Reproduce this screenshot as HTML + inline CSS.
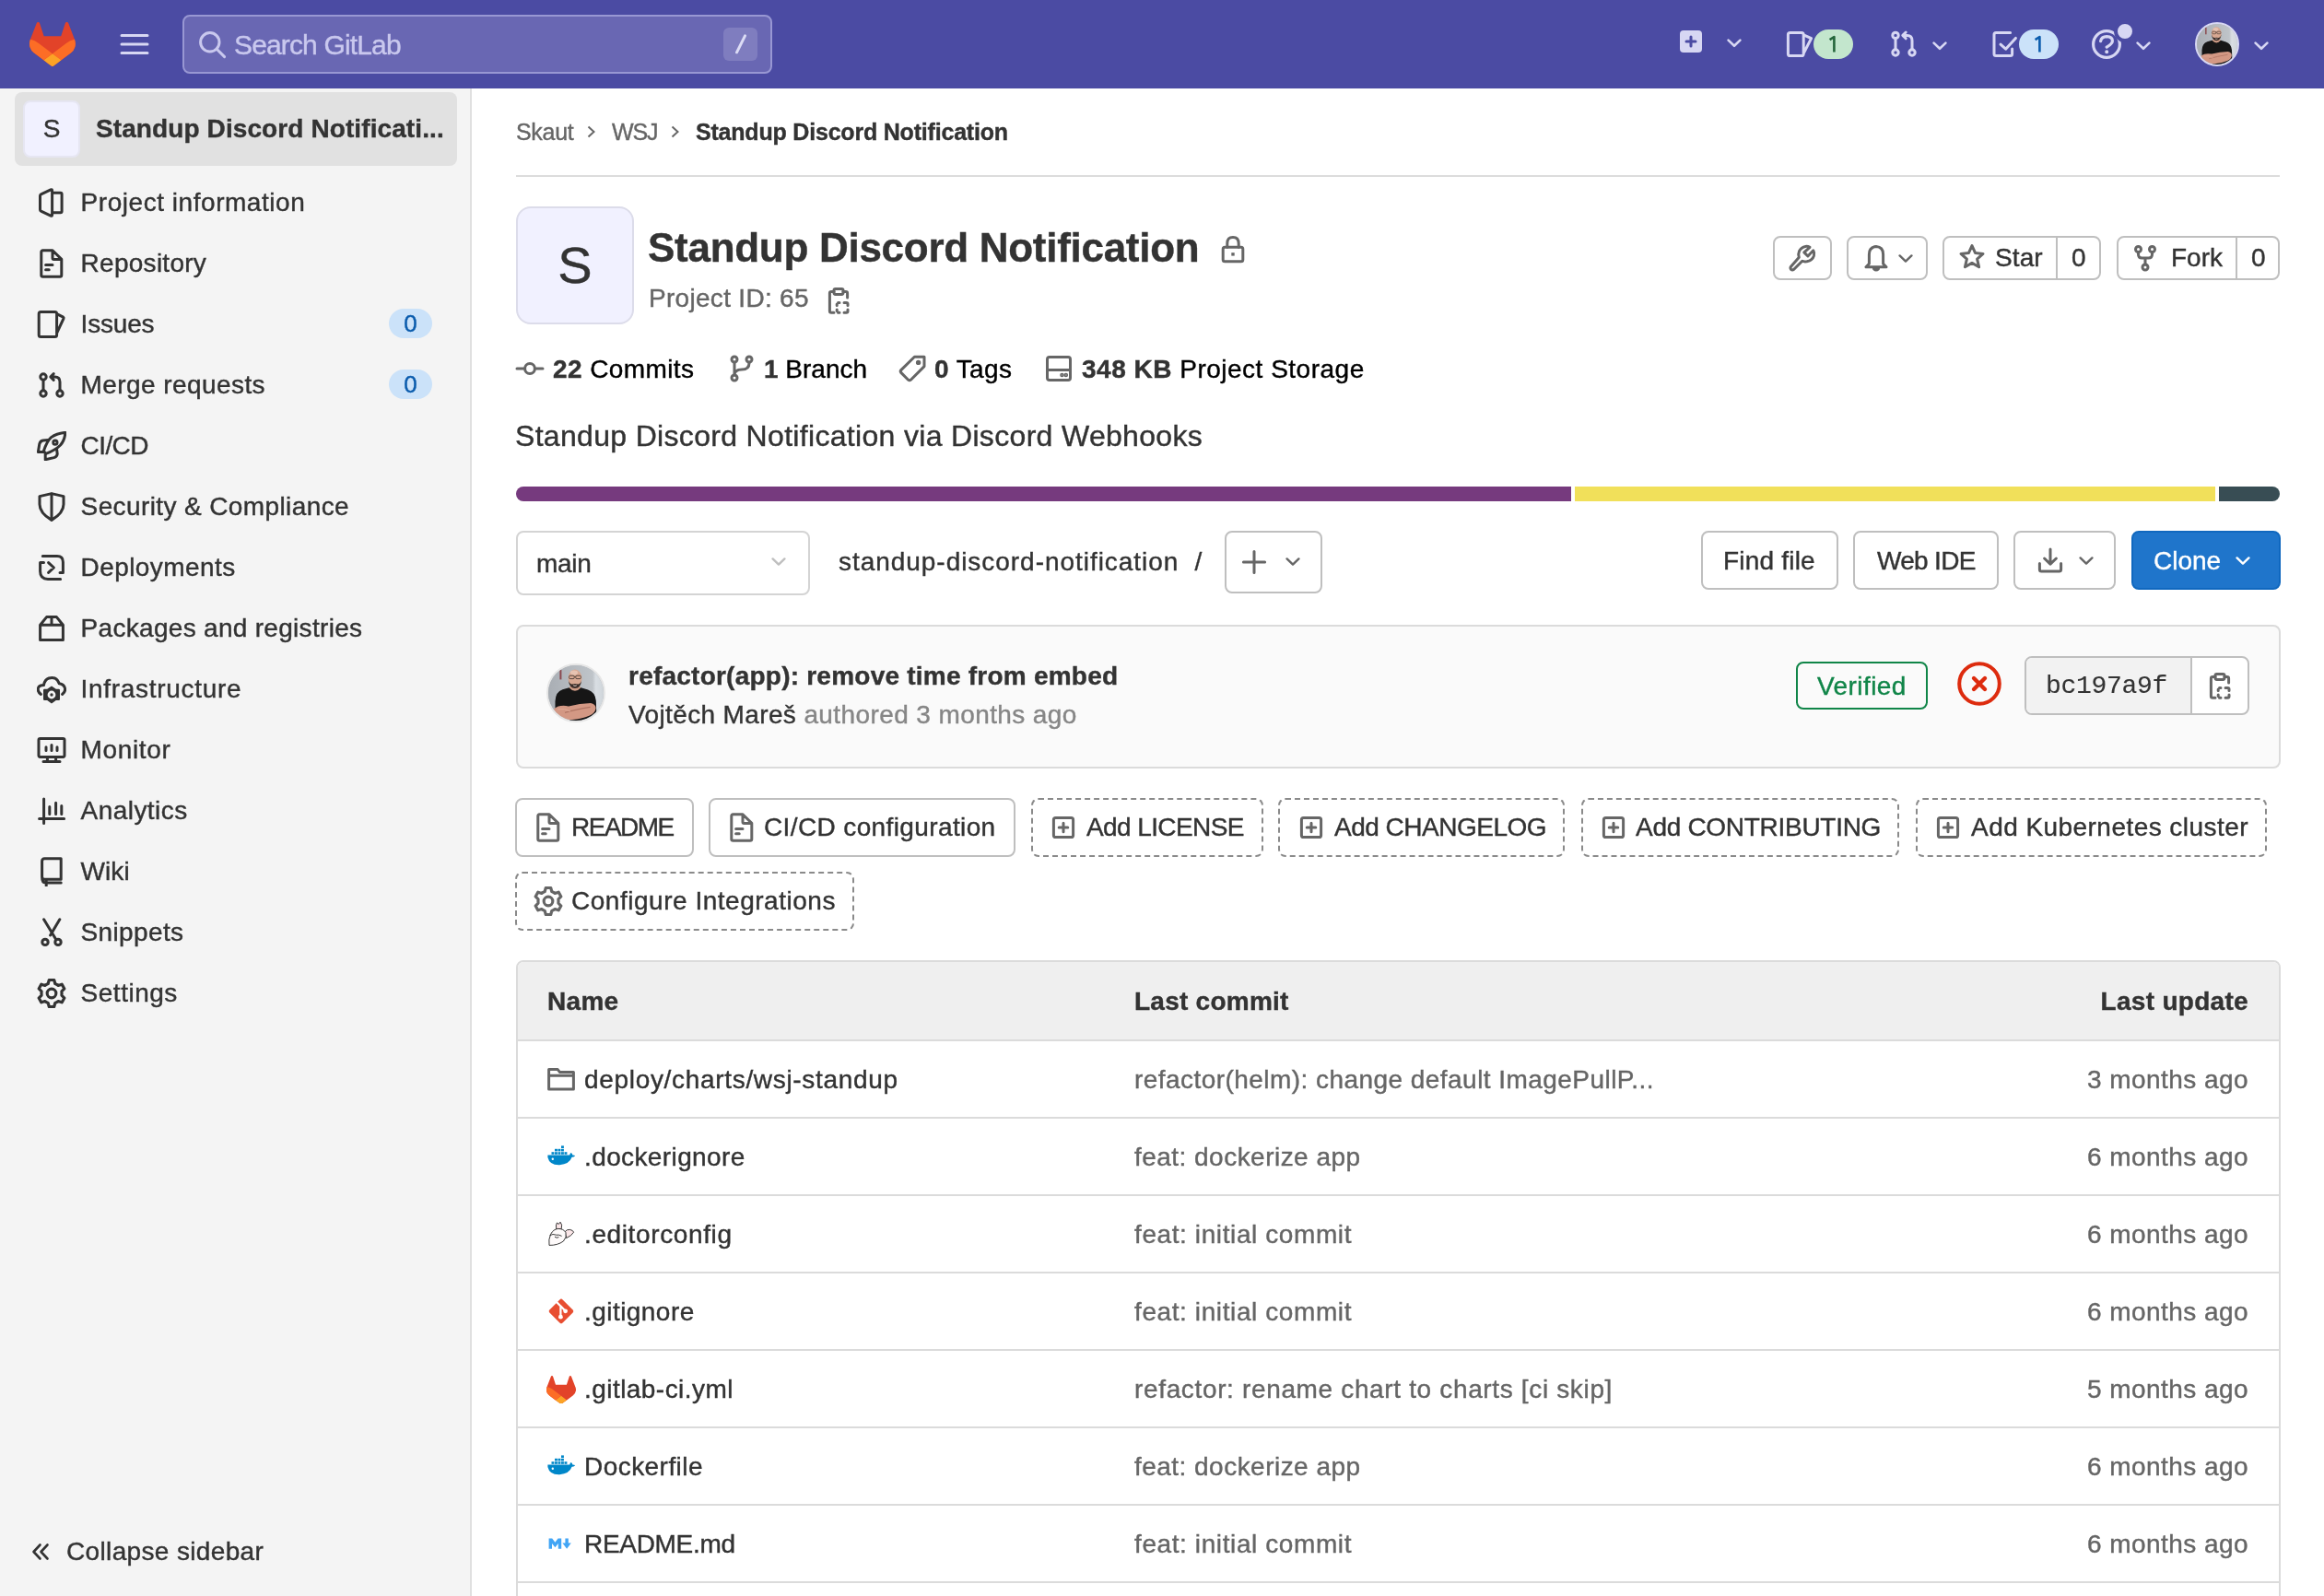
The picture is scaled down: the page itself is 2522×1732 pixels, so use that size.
<!DOCTYPE html>
<html><head><meta charset="utf-8">
<style>
*{box-sizing:border-box;margin:0;padding:0}
html,body{width:2522px;height:1732px;overflow:hidden;background:#fff}
.wrap{position:absolute;left:0;top:0;width:2522px;height:1732px;will-change:transform}
body{font-family:"Liberation Sans",sans-serif;color:#333;font-size:28px;line-height:40px;position:relative;-webkit-text-stroke:0.4px currentColor}
.abs{position:absolute}
svg{display:block}
.hdr{left:0;top:0;width:2522px;height:96px;background:#4b4ba3}
.sb{left:0;top:96px;width:512px;height:1636px;background:#f4f4f4;border-right:2px solid #e0e0e0}
.nowrap{white-space:nowrap}
.sbt{left:87.6px;white-space:nowrap;letter-spacing:0.5px;color:#333}
.bdg{width:47px;height:32px;border-radius:16px;background:#cbe2f9;color:#0b5cad;font-size:26px;line-height:32px;text-align:center}
.btn{border:2px solid #bfbfbf;border-radius:8px;background:#fff}
.g6{color:#666}
.dbtn{border:2px dashed #8a8a8a;border-radius:8px;background:#fff}
.sbtn{border:2px solid #bfbfbf;border-radius:8px;background:#fff}
</style></head>
<body><div class="wrap">
<!-- HEADER -->
<div class="abs hdr">
  <!-- logo -->
  <svg class="abs" style="left:32px;top:24px" width="50" height="48" viewBox="0 0 25 24">
    <path fill="#e24329" d="M24.507 9.5l-.034-.09L21.082.562a.896.896 0 0 0-1.694.091l-2.29 7.01H7.825L5.535.653a.898.898 0 0 0-1.694-.09L.451 9.411.416 9.5a6.297 6.297 0 0 0 2.09 7.278l.012.01.03.022 5.16 3.867 2.56 1.935 1.554 1.176a1.051 1.051 0 0 0 1.268 0l1.555-1.176 2.56-1.935 5.197-3.89.014-.01A6.297 6.297 0 0 0 24.507 9.5z"/>
    <path fill="#fc6d26" d="M24.507 9.5l-.034-.09a11.44 11.44 0 0 0-4.56 2.051l-7.447 5.632 4.742 3.584 5.197-3.89.014-.01A6.297 6.297 0 0 0 24.507 9.5z"/>
    <path fill="#fca326" d="M7.707 20.677l2.56 1.935 1.555 1.176a1.051 1.051 0 0 0 1.268 0l1.555-1.176 2.56-1.935-4.743-3.584-4.755 3.584z"/>
    <path fill="#fc6d26" d="M5.01 11.461a11.43 11.43 0 0 0-4.56-2.05L.416 9.5a6.297 6.297 0 0 0 2.09 7.278l.012.01.03.022 5.16 3.867 4.745-3.584-7.444-5.632z"/>
  </svg>
  <!-- hamburger -->
  <svg class="abs" style="left:130px;top:36px" width="32" height="24" viewBox="0 0 32 24">
    <g stroke="#d7d7f3" stroke-width="3" stroke-linecap="round"><path d="M2 2.5h28M2 12h28M2 21.5h28"/></g>
  </svg>
  <!-- search -->
  <div class="abs" style="left:198px;top:16px;width:640px;height:64px;border-radius:8px;background:#6967b3;border:2px solid #9897d3"></div>
  <svg class="abs" style="left:214px;top:32px" width="32" height="32" viewBox="0 0 16 16">
    <circle cx="6.9" cy="6.9" r="5.1" fill="none" stroke="#c9c8ee" stroke-width="1.5"/>
    <path d="M10.6 10.6l4.2 4.2" stroke="#c9c8ee" stroke-width="1.5" stroke-linecap="round"/>
  </svg>
  <div class="abs nowrap" style="left:254px;top:28.8px;color:#c9c8ee;font-size:30px;line-height:40px;letter-spacing:-0.85px">Search GitLab</div>
  <div class="abs" style="left:785px;top:30px;width:37px;height:36px;border-radius:6px;background:#7f7dbf"></div>
  <svg class="abs" style="left:785px;top:30px" width="37" height="36" viewBox="0 0 37 36"><path d="M23.5 8.8L14.5 26.8" stroke="#dcdcf5" stroke-width="3" stroke-linecap="round"/></svg>
</div>


<!-- HEADER RIGHT -->
<div class="abs" style="left:1823px;top:33px;width:24px;height:24px;border-radius:4px;background:#d7d7f3"></div>
<svg class="abs" style="left:1823px;top:33px" width="24" height="24" viewBox="0 0 24 24" fill="none" stroke="#4b4ba3" stroke-width="3" stroke-linecap="round"><path d="M12 7V17 M7 12H17"/></svg>
<svg class="abs" style="left:1874px;top:39px" width="16" height="16" viewBox="0 0 16 16" fill="none" stroke="#d7d7f3" stroke-width="2.6" stroke-linecap="round" stroke-linejoin="round"><path d="M1.6 4.6L8 10.8L14.4 4.6"/></svg>
<svg class="abs" style="left:1938px;top:32px" width="32" height="32" viewBox="0 0 32 32" fill="none" stroke="#d7d7f3" stroke-width="3" stroke-linecap="round" stroke-linejoin="round"><path d="M4.6 3.4H17Q19.2 3.4 19.2 5.6V26.4Q19.2 28.6 17 28.6H4.6Q2.4 28.6 2.4 26.4V5.6Q2.4 3.4 4.6 3.4Z M19.2 5.8L27.6 9.6L19.2 26"/></svg>
<div class="abs" style="left:1968px;top:32px;width:43px;height:32px;border-radius:16px;background:#c3e6cd"><svg class="abs" style="left:0;top:0" width="43" height="32" viewBox="0 0 43 32"><path d="M17.6 11.2L22.4 8V24.6" fill="none" stroke="#24663b" stroke-width="2.6" stroke-linejoin="round"/></svg></div>
<svg class="abs" style="left:2050px;top:32px" width="32" height="32" viewBox="0 0 32 32" fill="none" stroke="#d7d7f3" stroke-width="3" stroke-linecap="round" stroke-linejoin="round"><circle cx="7" cy="6.4" r="3.2"/><circle cx="7" cy="25" r="3.2"/><circle cx="25" cy="25" r="3.2"/><path d="M7 9.6V21.8 M25 21.8V12Q25 6.4 19.5 6.4H15.5 M18.2 3L14.8 6.4L18.2 9.8"/></svg>
<svg class="abs" style="left:2097px;top:42px" width="16" height="16" viewBox="0 0 16 16" fill="none" stroke="#d7d7f3" stroke-width="2.6" stroke-linecap="round" stroke-linejoin="round"><path d="M1.6 4.6L8 10.8L14.4 4.6"/></svg>
<svg class="abs" style="left:2161px;top:32px" width="32" height="32" viewBox="0 0 32 32" fill="none" stroke="#d7d7f3" stroke-width="3" stroke-linecap="round" stroke-linejoin="round"><path d="M20.6 3.4H5Q3 3.4 3 5.4V26.6Q3 28.6 5 28.6H20.6Q22.6 28.6 22.6 26.6V21 M10 16.2L15.6 21.2L26.4 9.4"/></svg>
<div class="abs" style="left:2191px;top:32px;width:43px;height:32px;border-radius:16px;background:#cbe2f9"><svg class="abs" style="left:0;top:0" width="43" height="32" viewBox="0 0 43 32"><path d="M17.6 11.2L22.4 8V24.6" fill="none" stroke="#0b5cad" stroke-width="2.6" stroke-linejoin="round"/></svg></div>
<svg class="abs" style="left:2270px;top:32px" width="32" height="32" viewBox="0 0 32 32" fill="none" stroke="#d7d7f3" stroke-width="3.2" stroke-linecap="round" stroke-linejoin="round"><circle cx="16" cy="16" r="14.4"/><path d="M9.6 12.6Q10.6 7.6 16.2 7.6Q22.4 7.8 22.4 12.4Q22.4 15.2 16.2 19.2"/><circle cx="16.2" cy="24.2" r="1.2" fill="#d7d7f3" stroke-width="1.6"/></svg>
<div class="abs" style="left:2294px;top:22px;width:24px;height:24px;border-radius:50%;background:#d7d7f3;border:4px solid #4b4ba3"></div>
<svg class="abs" style="left:2318px;top:42px" width="16" height="16" viewBox="0 0 16 16" fill="none" stroke="#d7d7f3" stroke-width="2.6" stroke-linecap="round" stroke-linejoin="round"><path d="M1.6 4.6L8 10.8L14.4 4.6"/></svg>
<div class="abs" style="left:2382px;top:24px;width:48px;height:48px;border-radius:50%;background:#b3b7bc;border:2px solid #d7d7f3;overflow:hidden"><svg width="44" height="44" viewBox="0 0 60 60"><defs><linearGradient id="bg2" x1="0" y1="0" x2="1" y2="0"><stop offset="0" stop-color="#a9aeb4"/><stop offset="0.8" stop-color="#bfc4c9"/><stop offset="0.86" stop-color="#d9dee3"/><stop offset="1" stop-color="#cfd5da"/></linearGradient><filter id="bl2" x="-10%" y="-10%" width="120%" height="120%"><feGaussianBlur stdDeviation="0.55"/></filter></defs><g filter="url(#bl2)"><rect width="60" height="60" fill="url(#bg2)"/><rect x="12.4" y="5" width="2" height="10.4" fill="#8b4a4f"/><path d="M23 23H35V31H23Z" fill="#cf9c86"/><ellipse cx="29" cy="14.2" rx="7.4" ry="9.6" fill="#d8a892"/><ellipse cx="28" cy="8" rx="4" ry="2.4" fill="#e6c3b2"/><path d="M21.8 15.4Q22.6 24.8 29 25Q35.4 24.8 36.2 15.4Q35.4 19.6 32.4 20.6Q29 19.6 25.6 20.6Q22.6 19.6 21.8 15.4Z" fill="#3d2f29"/><path d="M30.8 21.8Q29 22.8 27.2 21.8" stroke="#f2e4dc" stroke-width="0.9" fill="none"/><g fill="none" stroke="#4a3c36" stroke-width="0.9"><rect x="22.6" y="11.2" width="5.6" height="3.4" rx="1.2"/><rect x="29.8" y="11.2" width="5.6" height="3.4" rx="1.2"/><path d="M28.2 12.4H29.8"/></g><path d="M7.5 60V39Q8 28.5 15.5 26.2L22.6 24.2Q29 31.4 35.4 24.2L43 26.6Q50.6 29 51.8 38.4L52.6 60Z" fill="#121214"/><path d="M6.2 47.2Q12 42.4 22 44.4Q34 41.2 46 41Q51.6 42 51.6 46.6Q51 52 45 54.6Q36 58.6 26 59Q14 59.6 8.6 55.4Q5.4 52 6.2 47.2Z" fill="#d39884"/><path d="M18 51.4Q30 48 45.6 45.4" stroke="#b07564" stroke-width="1.1" fill="none"/><path d="M10 47.8Q18 46.2 24 50" stroke="#e1ad9a" stroke-width="0.9" fill="none"/></g></svg></div>
<svg class="abs" style="left:2446px;top:42px" width="16" height="16" viewBox="0 0 16 16" fill="none" stroke="#d7d7f3" stroke-width="2.6" stroke-linecap="round" stroke-linejoin="round"><path d="M1.6 4.6L8 10.8L14.4 4.6"/></svg>

<!-- SIDEBAR -->
<div class="abs sb"></div>
<div class="abs" style="left:16px;top:100px;width:480px;height:80px;border-radius:8px;background:#e1e1e1"></div>
<div class="abs" style="left:25px;top:109px;width:62px;height:62px;border-radius:8px;background:#f1f1ff;border:2px solid #e6e6f2;text-align:center;font-size:28px;line-height:58px;color:#333">S</div>
<div class="abs nowrap" style="left:104px;top:120.3px;font-weight:bold;letter-spacing:0.1px">Standup Discord Notificati...</div>
<svg class="abs" style="left:40px;top:203.8px" width="32" height="32" viewBox="0 0 32 32" fill="none" stroke="#333" stroke-width="3" stroke-linecap="round" stroke-linejoin="round"><path d="M4.5 6.8L15 1.8Q16.6 1.2 16.6 3V29Q16.6 30.8 15 30.2L4.5 25.2Q3.5 24.7 3.5 23.6V8.4Q3.5 7.3 4.5 6.8Z M16.6 5.2H25.6Q27.1 5.2 27.1 6.7V25.3Q27.1 26.8 25.6 26.8H16.6"/></svg>
<div class="abs sbt" style="top:200.1px;letter-spacing:0.54px">Project information</div>
<svg class="abs" style="left:40px;top:269.8px" width="32" height="32" viewBox="0 0 32 32" fill="none" stroke="#333" stroke-width="3" stroke-linecap="round" stroke-linejoin="round"><path d="M6.5 1.8H17L26.8 11.4V28.5Q26.8 30.2 25.1 30.2H6.5Q4.8 30.2 4.8 28.5V3.5Q4.8 1.8 6.5 1.8Z M17 1.8V10Q17 11.4 18.4 11.4H26.8 M9.6 17.6H17 M9.6 22.8H13.2"/></svg>
<div class="abs sbt" style="top:266.1px;letter-spacing:0.27px">Repository</div>
<svg class="abs" style="left:40px;top:335.8px" width="32" height="32" viewBox="0 0 32 32" fill="none" stroke="#333" stroke-width="3" stroke-linecap="round" stroke-linejoin="round"><path d="M4.2 2.4H19.6Q21.6 2.4 21.6 4.4V27.6Q21.6 29.6 19.6 29.6H4.2Q2.2 29.6 2.2 27.6V4.4Q2.2 2.4 4.2 2.4Z M21.6 4.6L28.6 8.2Q29.4 8.8 29 9.7L21.6 25.6"/></svg>
<div class="abs sbt" style="top:332.1px;letter-spacing:-0.2px">Issues</div>
<div class="abs bdg" style="left:422px;top:335.4px">0</div>
<svg class="abs" style="left:40px;top:401.8px" width="32" height="32" viewBox="0 0 32 32" fill="none" stroke="#333" stroke-width="3" stroke-linecap="round" stroke-linejoin="round"><circle cx="7" cy="7" r="3.2"/><circle cx="7" cy="25" r="3.2"/><circle cx="25" cy="25" r="3.2"/><path d="M7 10.2V21.8 M25 21.8V12.5Q25 7 19.5 7H15.5 M18.2 3.6L14.8 7L18.2 10.4"/></svg>
<div class="abs sbt" style="top:398.1px;letter-spacing:0.42px">Merge requests</div>
<div class="abs bdg" style="left:422px;top:401.4px">0</div>
<svg class="abs" style="left:40px;top:467.8px" width="32" height="32" viewBox="0 0 32 32" fill="none" stroke="#333" stroke-width="3" stroke-linecap="round" stroke-linejoin="round"><path d="M30.8 1.4Q22 2 15.5 6.6Q11 10.5 7.4 21.4L9.8 24.4Q20 20.6 25.6 15Q30.4 9.6 30.8 1.4Z"/><path d="M12.4 9.4L6.6 10Q3.6 10.6 2.8 13.8L1.4 22.6H7.4"/><path d="M21.6 19.8L22.2 24.6Q22 27.6 18.6 28.6L9.2 30.8V24.6"/><circle cx="19.9" cy="12.2" r="2.2" stroke-width="2.8"/></svg>
<div class="abs sbt" style="top:464.1px;letter-spacing:-0.6px">CI/CD</div>
<svg class="abs" style="left:40px;top:533.8px" width="32" height="32" viewBox="0 0 32 32" fill="none" stroke="#333" stroke-width="3" stroke-linecap="round" stroke-linejoin="round"><path d="M16 1.6L29 4.6V13.2Q29 22.6 16 30.4Q3 22.6 3 13.2V4.6Z M16 1.6V30.4"/></svg>
<div class="abs sbt" style="top:530.1px;letter-spacing:0.39px">Security &amp; Compliance</div>
<svg class="abs" style="left:40px;top:599.8px" width="32" height="32" viewBox="0 0 32 32" fill="none" stroke="#333" stroke-width="3" stroke-linecap="round" stroke-linejoin="round"><path d="M6.3 3.6H22Q28.4 3.6 28.4 10V21.6H25 M3.6 10.4H7.5 M3.6 10.4V20Q3.6 28.4 12 28.4H25.6 M12.6 10.6L18.4 16L12.6 21.4"/></svg>
<div class="abs sbt" style="top:596.1px;letter-spacing:0.42px">Deployments</div>
<svg class="abs" style="left:40px;top:665.8px" width="32" height="32" viewBox="0 0 32 32" fill="none" stroke="#333" stroke-width="3" stroke-linecap="round" stroke-linejoin="round"><path d="M3.6 12.2H28.4V28.4H3.6Z M3.6 12.2L10.6 3.6H21.4L28.4 12.2 M16 3.6V12.2"/></svg>
<div class="abs sbt" style="top:662.1px;letter-spacing:0.3px">Packages and registries</div>
<svg class="abs" style="left:40px;top:731.8px" width="32" height="32" viewBox="0 0 32 32" fill="none" stroke="#333" stroke-width="3" stroke-linecap="round" stroke-linejoin="round"><path d="M4.4 21.4Q1 19 1.2 15.6Q1.8 11.6 7.4 11.6Q8.6 5.4 13 4Q16.6 2.8 19.6 4Q22.8 5.6 24.2 9.8Q29.8 10.6 30.6 15.4Q31 19 27.6 21.4"/><path fill="#333" stroke="none" fill-rule="evenodd" d="M16 12.4L20.8 15.8H23.8Q25 15.8 25 17V26.8Q25 28 23.8 28H20.8L16 31.4L11.2 28H8.2Q7 28 7 26.8V17Q7 15.8 8.2 15.8H11.2Z M16 17.6A4.4 4.4 0 1 0 16 26.4A4.4 4.4 0 1 0 16 17.6Z"/><circle cx="16" cy="22" r="1.7" fill="#333" stroke="none"/></svg>
<div class="abs sbt" style="top:728.1px;letter-spacing:0.69px">Infrastructure</div>
<svg class="abs" style="left:40px;top:797.8px" width="32" height="32" viewBox="0 0 32 32" fill="none" stroke="#333" stroke-width="3" stroke-linecap="round" stroke-linejoin="round"><path d="M3.6 3.4H28.4Q30 3.4 30 5V21.8Q30 23.4 28.4 23.4H3.6Q2 23.4 2 21.8V5Q2 3.4 3.6 3.4Z M11.4 23.4V28 M20.6 23.4V28 M7 28.4H25 M10 12.8V16.4 M16 10.4V16.4 M22 12.8V16.4"/></svg>
<div class="abs sbt" style="top:794.1px;letter-spacing:0.63px">Monitor</div>
<svg class="abs" style="left:40px;top:863.8px" width="32" height="32" viewBox="0 0 32 32" fill="none" stroke="#333" stroke-width="3" stroke-linecap="round" stroke-linejoin="round"><path d="M7.6 3V29.4 M2.6 24.6H29.6 M13.8 11.4V19.4 M20.6 7.2V19.4 M26.8 10.4V19.4"/></svg>
<div class="abs sbt" style="top:860.1px;letter-spacing:0.44px">Analytics</div>
<svg class="abs" style="left:40px;top:929.8px" width="32" height="32" viewBox="0 0 32 32" fill="none" stroke="#333" stroke-width="3" stroke-linecap="round" stroke-linejoin="round"><path d="M8.4 1.8H26.2V24.2H8.4Q5.6 24.2 5.6 21.4V4.6Q5.6 1.8 8.4 1.8Z M5.6 21.4Q5.6 28 9.4 28H26.2 M10.2 24.2V31.2"/></svg>
<div class="abs sbt" style="top:926.1px;letter-spacing:0.05px">Wiki</div>
<svg class="abs" style="left:40px;top:995.8px" width="32" height="32" viewBox="0 0 32 32" fill="none" stroke="#333" stroke-width="3" stroke-linecap="round" stroke-linejoin="round"><path d="M7.6 1.8L20.6 23.2 M24.8 1.8L14.6 19"/><circle cx="9" cy="26.4" r="3.2"/><circle cx="23" cy="26.4" r="3.2"/></svg>
<div class="abs sbt" style="top:992.1px;letter-spacing:0.35px">Snippets</div>
<svg class="abs" style="left:40px;top:1061.8px" width="32" height="32" viewBox="0 0 32 32" fill="none" stroke="#333" stroke-width="3" stroke-linecap="round" stroke-linejoin="round"><g transform="translate(16 16) scale(1.05) translate(-16 -16)"><path d="M13.4 2.2H18.6L19.6 6Q21.4 6.8 22.8 7.8L26.6 6.6L29.2 11.2L26.4 14Q26.6 16 26.4 18L29.2 20.8L26.6 25.4L22.8 24.2Q21.4 25.2 19.6 26L18.6 29.8H13.4L12.4 26Q10.6 25.2 9.2 24.2L5.4 25.4L2.8 20.8L5.6 18Q5.4 16 5.6 14L2.8 11.2L5.4 6.6L9.2 7.8Q10.6 6.8 12.4 6Z" stroke-linejoin="round"/><circle cx="16" cy="16" r="4.6"/></g></svg>
<div class="abs sbt" style="top:1058.1px;letter-spacing:0.51px">Settings</div>
<svg class="abs" style="left:32px;top:1672px" width="24" height="24" viewBox="0 0 24 24" fill="none" stroke="#333" stroke-width="2.6" stroke-linecap="round" stroke-linejoin="round"><path d="M11.5 4.5L4.5 12L11.5 19.5 M19.5 4.5L12.5 12L19.5 19.5"/></svg>
<div class="abs nowrap" style="left:72px;top:1664px;letter-spacing:0.35px">Collapse sidebar</div>



<!-- BREADCRUMB -->
<div class="abs nowrap g6" style="left:560px;top:125.3px;font-size:25px;line-height:36px;letter-spacing:-0.3px">Skaut</div>
<svg class="abs" style="left:634px;top:135px" width="16" height="16" viewBox="0 0 16 16" fill="none" stroke="#666" stroke-width="2"><path d="M4.5 2.5L10.5 8L4.5 13.5"/></svg>
<div class="abs nowrap g6" style="left:664px;top:125.3px;font-size:25px;line-height:36px;letter-spacing:-1.1px">WSJ</div>
<svg class="abs" style="left:725px;top:135px" width="16" height="16" viewBox="0 0 16 16" fill="none" stroke="#666" stroke-width="2"><path d="M4.5 2.5L10.5 8L4.5 13.5"/></svg>
<div class="abs nowrap" style="left:755px;top:125.3px;font-size:25px;line-height:36px;font-weight:bold;letter-spacing:-0.2px">Standup Discord Notification</div>
<div class="abs" style="left:560px;top:190px;width:1914px;height:2px;background:#dcdcdc"></div>

<!-- PROJECT HEADER -->
<div class="abs" style="left:560px;top:224px;width:128px;height:128px;border-radius:16px;background:#f1f1ff;border:2px solid #dcdcea;text-align:center;font-size:56px;line-height:124px;color:#333">S</div>
<div class="abs nowrap" style="left:703px;top:240.6px;font-size:44px;line-height:56px;font-weight:bold;letter-spacing:-0.28px">Standup Discord Notification</div>
<svg class="abs" style="left:1322px;top:254px" width="32" height="32" viewBox="0 0 32 32" fill="none" stroke="#666" stroke-width="3" stroke-linecap="round" stroke-linejoin="round"><rect x="5.2" y="14.2" width="21.6" height="15.6" rx="2"/><path d="M9.8 14.2V10.2Q9.8 3.4 16 3.4Q22.2 3.4 22.2 10.2V14.2"/><path d="M16 20.2V23.6" stroke-width="3.4" stroke-linecap="butt"/></svg>
<div class="abs nowrap g6" style="left:704px;top:304.2px;letter-spacing:0.3px">Project ID: 65</div>
<svg class="abs" style="left:894px;top:310px" width="32" height="32" viewBox="0 0 32 32" fill="none" stroke="#666" stroke-width="3" stroke-linecap="round" stroke-linejoin="round"><path d="M11 6.5H8.2Q6.4 6.5 6.4 8.3V27.5Q6.4 29.3 8.2 29.3H11 M21 6.5H23.8Q25.6 6.5 25.6 8.3V13"/><rect x="11" y="3.4" width="10" height="6" rx="1.6"/><path d="M15.5 18.5H17 M22 18.5H24.5Q26 18.5 26 20V21.5 M26 26V27.8Q26 29.3 24.5 29.3H22 M17 29.3H15.5 M14.2 27.5V26 M14.2 21.5V20" /></svg>

<div class="abs btn" style="left:1924px;top:256px;width:64px;height:48px"></div>
<svg class="abs" style="left:1940px;top:264px" width="32" height="32" viewBox="0 0 32 32" fill="none" stroke="#666" stroke-width="3" stroke-linecap="round" stroke-linejoin="round"><path d="M24 4.3L17.8 9.9L21.9 14L27.8 7.8Q29.2 10 28.4 13.6Q27 18.4 20.8 19.8Q17.4 20.2 15.8 19.3L6.8 28.3Q5 29.6 3.6 28.3Q2.4 26.8 3.6 25.2L12.3 15.3Q11 12 12.6 8.4Q14.6 4.2 19.4 3.4Q22 3.2 24 4.3Z"/></svg>
<div class="abs btn" style="left:2004px;top:256px;width:88px;height:48px"></div>
<svg class="abs" style="left:2020px;top:264px" width="32" height="32" viewBox="0 0 32 32" fill="none" stroke="#666" stroke-width="3" stroke-linecap="round" stroke-linejoin="round"><path d="M16 3.6Q8.4 4.2 8.4 12V22.2L5 25.8H27L23.6 22.2V12Q23.6 4.2 16 3.6Z M13.6 27.8Q16 30 18.4 27.8"/></svg>
<svg class="abs" style="left:2060px;top:273px" width="16" height="16" viewBox="0 0 16 16" fill="none" stroke="#666" stroke-width="2.4" stroke-linecap="round" stroke-linejoin="round"><path d="M1.6 4.4L8 10.6L14.4 4.4"/></svg>

<div class="abs btn" style="left:2108px;top:256px;width:172px;height:48px"></div>
<div class="abs" style="left:2231px;top:258px;width:2px;height:44px;background:#bfbfbf"></div>
<svg class="abs" style="left:2124px;top:263px" width="32" height="32" viewBox="0 0 32 32" fill="none" stroke="#666" stroke-width="3" stroke-linecap="round" stroke-linejoin="round"><path d="M16 3.6L19.6 11.6L28 12.4L21.6 18.2L23.6 26.8L16 22.4L8.4 26.8L10.4 18.2L4 12.4L12.4 11.6Z"/></svg>
<div class="abs nowrap" style="left:2165px;top:260px;letter-spacing:0.1px">Star</div>
<div class="abs nowrap" style="left:2248px;top:260px">0</div>

<div class="abs btn" style="left:2297px;top:256px;width:177px;height:48px"></div>
<div class="abs" style="left:2426px;top:258px;width:2px;height:44px;background:#bfbfbf"></div>
<svg class="abs" style="left:2312px;top:264px" width="32" height="32" viewBox="0 0 32 32" fill="none" stroke="#666" stroke-width="3" stroke-linecap="round" stroke-linejoin="round"><circle cx="8.5" cy="6.5" r="3"/><circle cx="23.5" cy="6.5" r="3"/><circle cx="16" cy="26" r="3"/><path d="M8.5 9.5V12Q8.5 16 12.5 16H19.5Q23.5 16 23.5 12V9.5 M16 16V23"/></svg>
<div class="abs nowrap" style="left:2356px;top:260px">Fork</div>
<div class="abs nowrap" style="left:2443px;top:260px">0</div>

<!-- STATS -->
<svg class="abs" style="left:559px;top:384px" width="32" height="32" viewBox="0 0 32 32" fill="none" stroke="#666" stroke-width="3" stroke-linecap="round" stroke-linejoin="round"><circle cx="16" cy="16" r="5.4"/><path d="M2 16H10.6 M21.4 16H30"/></svg>
<div class="abs nowrap" style="left:600px;top:381.3px;letter-spacing:0.4px;color:#000"><b style="color:#333">22</b> Commits</div>
<svg class="abs" style="left:789px;top:384px" width="32" height="32" viewBox="0 0 32 32" fill="none" stroke="#666" stroke-width="3" stroke-linecap="round" stroke-linejoin="round"><circle cx="8" cy="6" r="3"/><circle cx="24" cy="6" r="3"/><circle cx="8" cy="26" r="3"/><path d="M8 9V23 M24 9V10Q24 17 16 17Q8 17 8 23"/></svg>
<div class="abs nowrap" style="left:829px;top:381.3px;letter-spacing:0px;color:#000"><b style="color:#333">1</b> Branch</div>
<svg class="abs" style="left:974px;top:384px" width="32" height="32" viewBox="0 0 32 32" fill="none" stroke="#666" stroke-width="3" stroke-linecap="round" stroke-linejoin="round"><path d="M29 3.2V13.6L14.4 28.2Q13 29.4 11.6 28.2L3.8 20.4Q2.6 19 3.8 17.6L18.4 3.2Z"/><circle cx="22.6" cy="9.4" r="1.2" fill="#666"/></svg>
<div class="abs nowrap" style="left:1014px;top:381.3px;letter-spacing:0.4px;color:#000"><b style="color:#333">0</b> Tags</div>
<svg class="abs" style="left:1133px;top:384px" width="32" height="32" viewBox="0 0 32 32" fill="none" stroke="#666" stroke-width="3" stroke-linecap="round" stroke-linejoin="round"><rect x="3.5" y="3.5" width="25" height="25" rx="2.4"/><path d="M3.5 17.5H28.5"/><circle cx="19.5" cy="23" r="0.8" fill="#666"/><circle cx="23.8" cy="23" r="0.8" fill="#666"/></svg>
<div class="abs nowrap" style="left:1174px;top:381.3px;letter-spacing:0.5px;color:#000"><b style="color:#333">348 KB</b> Project Storage</div>

<!-- DESCRIPTION -->
<div class="abs nowrap" style="left:559px;top:450.6px;font-size:32px;line-height:44px;letter-spacing:0.32px">Standup Discord Notification via Discord Webhooks</div>

<!-- LANGUAGE BAR -->
<div class="abs" style="left:560px;top:528px;width:1914px;height:16px;border-radius:8px;overflow:hidden">
  <div class="abs" style="left:0;top:0;width:1145px;height:16px;background:#763a7e"></div>
  <div class="abs" style="left:1149px;top:0;width:695px;height:16px;background:#f1e05a"></div>
  <div class="abs" style="left:1848px;top:0;width:66px;height:16px;background:#384d54"></div>
</div>


<!-- BRANCH ROW -->
<div class="abs" style="left:560px;top:576px;width:319px;height:70px;border:2px solid #d4d4d4;border-radius:8px;background:#fff"></div>
<div class="abs nowrap" style="left:582px;top:592.3px;letter-spacing:-0.3px">main</div>
<svg class="abs" style="left:837px;top:602px" width="16" height="16" viewBox="0 0 16 16" fill="none" stroke="#bfbfbf" stroke-width="2.4" stroke-linecap="round" stroke-linejoin="round"><path d="M1.6 4.4L8 10.6L14.4 4.4"/></svg>
<div class="abs nowrap" style="left:910px;top:590.3px;letter-spacing:0.96px">standup-discord-notification</div>
<div class="abs nowrap" style="left:1296.5px;top:590.3px">/</div>
<div class="abs sbtn" style="left:1329px;top:576px;width:106px;height:68px"></div>
<svg class="abs" style="left:1345px;top:594px" width="32" height="32" viewBox="0 0 32 32" fill="none" stroke="#666" stroke-width="3" stroke-linecap="round"><path d="M16 4.4V27.6 M4.4 16H27.6"/></svg>
<svg class="abs" style="left:1395px;top:602px" width="16" height="16" viewBox="0 0 16 16" fill="none" stroke="#666" stroke-width="2.4" stroke-linecap="round" stroke-linejoin="round"><path d="M1.6 4.4L8 10.6L14.4 4.4"/></svg>

<div class="abs sbtn" style="left:1846px;top:576px;width:149px;height:64px"></div>
<div class="abs nowrap" style="left:1870px;top:589.3px;letter-spacing:0.2px">Find file</div>
<div class="abs sbtn" style="left:2011px;top:576px;width:158px;height:64px"></div>
<div class="abs nowrap" style="left:2037px;top:589.3px;letter-spacing:-0.7px">Web IDE</div>
<div class="abs sbtn" style="left:2185px;top:576px;width:111px;height:64px"></div>
<svg class="abs" style="left:2209px;top:592px" width="32" height="32" viewBox="0 0 32 32" fill="none" stroke="#666" stroke-width="3" stroke-linecap="round" stroke-linejoin="round"><path d="M16 4V20 M9.6 14L16 20.2L22.4 14 M4.4 19.6V26Q4.4 28 6.4 28H25.6Q27.6 28 27.6 26V19.6"/></svg>
<svg class="abs" style="left:2256px;top:601px" width="16" height="16" viewBox="0 0 16 16" fill="none" stroke="#666" stroke-width="2.4" stroke-linecap="round" stroke-linejoin="round"><path d="M1.6 4.4L8 10.6L14.4 4.4"/></svg>
<div class="abs" style="left:2313px;top:576px;width:162px;height:64px;border-radius:8px;background:#1f75cb;border:2px solid #1068bf"></div>
<div class="abs nowrap" style="left:2337px;top:589.3px;color:#fff">Clone</div>
<svg class="abs" style="left:2426px;top:601px" width="16" height="16" viewBox="0 0 16 16" fill="none" stroke="#fff" stroke-width="2.4" stroke-linecap="round" stroke-linejoin="round"><path d="M1.6 4.4L8 10.6L14.4 4.4"/></svg>

<!-- COMMIT BOX -->
<div class="abs" style="left:560px;top:678px;width:1915px;height:156px;border:2px solid #dbdbdb;border-radius:8px;background:#fafafa"></div>
<div class="abs" style="left:593px;top:720px;width:64px;height:64px;border-radius:50%;background:#b3b7bc;border:2px solid #e6e6e6;overflow:hidden"><svg width="60" height="60" viewBox="0 0 60 60"><defs><linearGradient id="bg1" x1="0" y1="0" x2="1" y2="0"><stop offset="0" stop-color="#a9aeb4"/><stop offset="0.8" stop-color="#bfc4c9"/><stop offset="0.86" stop-color="#d9dee3"/><stop offset="1" stop-color="#cfd5da"/></linearGradient><filter id="bl1" x="-10%" y="-10%" width="120%" height="120%"><feGaussianBlur stdDeviation="0.55"/></filter></defs><g filter="url(#bl1)"><rect width="60" height="60" fill="url(#bg1)"/><rect x="12.4" y="5" width="2" height="10.4" fill="#8b4a4f"/><path d="M23 23H35V31H23Z" fill="#cf9c86"/><ellipse cx="29" cy="14.2" rx="7.4" ry="9.6" fill="#d8a892"/><ellipse cx="28" cy="8" rx="4" ry="2.4" fill="#e6c3b2"/><path d="M21.8 15.4Q22.6 24.8 29 25Q35.4 24.8 36.2 15.4Q35.4 19.6 32.4 20.6Q29 19.6 25.6 20.6Q22.6 19.6 21.8 15.4Z" fill="#3d2f29"/><path d="M30.8 21.8Q29 22.8 27.2 21.8" stroke="#f2e4dc" stroke-width="0.9" fill="none"/><g fill="none" stroke="#4a3c36" stroke-width="0.9"><rect x="22.6" y="11.2" width="5.6" height="3.4" rx="1.2"/><rect x="29.8" y="11.2" width="5.6" height="3.4" rx="1.2"/><path d="M28.2 12.4H29.8"/></g><path d="M7.5 60V39Q8 28.5 15.5 26.2L22.6 24.2Q29 31.4 35.4 24.2L43 26.6Q50.6 29 51.8 38.4L52.6 60Z" fill="#121214"/><path d="M6.2 47.2Q12 42.4 22 44.4Q34 41.2 46 41Q51.6 42 51.6 46.6Q51 52 45 54.6Q36 58.6 26 59Q14 59.6 8.6 55.4Q5.4 52 6.2 47.2Z" fill="#d39884"/><path d="M18 51.4Q30 48 45.6 45.4" stroke="#b07564" stroke-width="1.1" fill="none"/><path d="M10 47.8Q18 46.2 24 50" stroke="#e1ad9a" stroke-width="0.9" fill="none"/></g></svg></div>
<div class="abs nowrap" style="left:682px;top:713.8px;font-weight:bold;letter-spacing:0.23px">refactor(app): remove time from embed</div>
<div class="abs nowrap" style="left:682px;top:755.8px;letter-spacing:0.37px">Vojtěch Mareš <span style="color:#868686;letter-spacing:0.4px">authored 3 months ago</span></div>
<div class="abs" style="left:1949px;top:718px;width:143px;height:52px;border:2px solid #108548;border-radius:8px"></div>
<div class="abs nowrap" style="left:1972px;top:724.8px;color:#108548;letter-spacing:0.42px">Verified</div>
<svg class="abs" style="left:2124px;top:718px" width="48" height="48" viewBox="0 0 48 48"><circle cx="24" cy="24" r="21.8" fill="none" stroke="#dd2b0e" stroke-width="4"/><path d="M18 18L30 30M30 18L18 30" stroke="#dd2b0e" stroke-width="4.4" stroke-linecap="round"/></svg>
<div class="abs" style="left:2197px;top:712px;width:244px;height:64px;border:2px solid #bfbfbf;border-radius:8px;background:#fff;overflow:hidden"><div class="abs" style="left:0;top:0;width:180px;height:60px;background:#f2f2f2;border-right:2px solid #bfbfbf"></div></div>
<div class="abs nowrap" style="left:2220px;top:724.8px;font-family:'Liberation Mono',monospace;color:#333;letter-spacing:-0.3px;-webkit-text-stroke:0.15px #333">bc197a9f</div>
<svg class="abs" style="left:2393px;top:728px" width="32" height="32" viewBox="0 0 32 32" fill="none" stroke="#666" stroke-width="3" stroke-linecap="round" stroke-linejoin="round"><path d="M11 6.5H8.2Q6.4 6.5 6.4 8.3V27.5Q6.4 29.3 8.2 29.3H11 M21 6.5H23.8Q25.6 6.5 25.6 8.3V13"/><rect x="11" y="3.4" width="10" height="6" rx="1.6"/><path d="M15.5 18.5H17 M22 18.5H24.5Q26 18.5 26 20V21.5 M26 26V27.8Q26 29.3 24.5 29.3H22 M17 29.3H15.5 M14.2 27.5V26 M14.2 21.5V20"/></svg>

<!-- SHORTCUTS -->
<div class="abs sbtn" style="left:559px;top:866px;width:194px;height:64px"></div>
<svg class="abs" style="left:579px;top:882px" width="32" height="32" viewBox="0 0 32 32" fill="none" stroke="#666" stroke-width="3" stroke-linecap="round" stroke-linejoin="round"><path d="M6.5 1.8H17L26.8 11.4V28.5Q26.8 30.2 25.1 30.2H6.5Q4.8 30.2 4.8 28.5V3.5Q4.8 1.8 6.5 1.8Z M17 1.8V10Q17 11.4 18.4 11.4H26.8 M9.6 17.6H17 M9.6 22.8H13.2"/></svg>
<div class="abs nowrap" style="left:620px;top:878.3px;letter-spacing:-1.5px">README</div>
<div class="abs sbtn" style="left:769px;top:866px;width:333px;height:64px"></div>
<svg class="abs" style="left:789px;top:882px" width="32" height="32" viewBox="0 0 32 32" fill="none" stroke="#666" stroke-width="3" stroke-linecap="round" stroke-linejoin="round"><path d="M6.5 1.8H17L26.8 11.4V28.5Q26.8 30.2 25.1 30.2H6.5Q4.8 30.2 4.8 28.5V3.5Q4.8 1.8 6.5 1.8Z M17 1.8V10Q17 11.4 18.4 11.4H26.8 M9.6 17.6H17 M9.6 22.8H13.2"/></svg>
<div class="abs nowrap" style="left:829px;top:878.3px;letter-spacing:0.38px">CI/CD configuration</div>
<div class="abs dbtn" style="left:1119px;top:866px;width:252px;height:64px"></div>
<svg class="abs" style="left:1138px;top:882px" width="32" height="32" viewBox="0 0 32 32" fill="none" stroke="#666" stroke-width="3" stroke-linecap="round" stroke-linejoin="round"><rect x="5.4" y="5.4" width="21.2" height="21.2" rx="2.2"/><path d="M16 11.2V20.8 M11.2 16H20.8"/></svg>
<div class="abs nowrap" style="left:1179px;top:878.3px;letter-spacing:-0.6px">Add LICENSE</div>
<div class="abs dbtn" style="left:1387px;top:866px;width:311px;height:64px"></div>
<svg class="abs" style="left:1407px;top:882px" width="32" height="32" viewBox="0 0 32 32" fill="none" stroke="#666" stroke-width="3" stroke-linecap="round" stroke-linejoin="round"><rect x="5.4" y="5.4" width="21.2" height="21.2" rx="2.2"/><path d="M16 11.2V20.8 M11.2 16H20.8"/></svg>
<div class="abs nowrap" style="left:1448px;top:878.3px;letter-spacing:-0.5px">Add CHANGELOG</div>
<div class="abs dbtn" style="left:1716px;top:866px;width:345px;height:64px"></div>
<svg class="abs" style="left:1735px;top:882px" width="32" height="32" viewBox="0 0 32 32" fill="none" stroke="#666" stroke-width="3" stroke-linecap="round" stroke-linejoin="round"><rect x="5.4" y="5.4" width="21.2" height="21.2" rx="2.2"/><path d="M16 11.2V20.8 M11.2 16H20.8"/></svg>
<div class="abs nowrap" style="left:1775px;top:878.3px;letter-spacing:-0.29px">Add CONTRIBUTING</div>
<div class="abs dbtn" style="left:2079px;top:866px;width:381px;height:64px"></div>
<svg class="abs" style="left:2098px;top:882px" width="32" height="32" viewBox="0 0 32 32" fill="none" stroke="#666" stroke-width="3" stroke-linecap="round" stroke-linejoin="round"><rect x="5.4" y="5.4" width="21.2" height="21.2" rx="2.2"/><path d="M16 11.2V20.8 M11.2 16H20.8"/></svg>
<div class="abs nowrap" style="left:2139px;top:878.3px;letter-spacing:0.45px">Add Kubernetes cluster</div>
<div class="abs dbtn" style="left:559px;top:946px;width:368px;height:64px"></div>
<svg class="abs" style="left:579px;top:962px" width="32" height="32" viewBox="0 0 32 32" fill="none" stroke="#666" stroke-width="3" stroke-linecap="round" stroke-linejoin="round"><g transform="translate(16 16) scale(1.05) translate(-16 -16)"><path d="M13.4 2.2H18.6L19.6 6Q21.4 6.8 22.8 7.8L26.6 6.6L29.2 11.2L26.4 14Q26.6 16 26.4 18L29.2 20.8L26.6 25.4L22.8 24.2Q21.4 25.2 19.6 26L18.6 29.8H13.4L12.4 26Q10.6 25.2 9.2 24.2L5.4 25.4L2.8 20.8L5.6 18Q5.4 16 5.6 14L2.8 11.2L5.4 6.6L9.2 7.8Q10.6 6.8 12.4 6Z"/><circle cx="16" cy="16" r="4.6"/></g></svg>
<div class="abs nowrap" style="left:620px;top:958.3px;letter-spacing:0.52px">Configure Integrations</div>

<!-- TABLE -->
<div class="abs" style="left:560px;top:1042px;width:1915px;height:760px;border:2px solid #dbdbdb;border-radius:8px;overflow:hidden;background:#fff">
<div class="abs" style="left:0;top:0;width:1911px;height:86px;background:#efefef;border-bottom:2px solid #dbdbdb"></div>
<div class="abs" style="left:0;top:168px;width:1911px;height:2px;background:#dbdbdb"></div>
<div class="abs" style="left:0;top:252px;width:1911px;height:2px;background:#dbdbdb"></div>
<div class="abs" style="left:0;top:336px;width:1911px;height:2px;background:#dbdbdb"></div>
<div class="abs" style="left:0;top:420px;width:1911px;height:2px;background:#dbdbdb"></div>
<div class="abs" style="left:0;top:504px;width:1911px;height:2px;background:#dbdbdb"></div>
<div class="abs" style="left:0;top:588px;width:1911px;height:2px;background:#dbdbdb"></div>
<div class="abs" style="left:0;top:672px;width:1911px;height:2px;background:#dbdbdb"></div>
<div class="abs" style="left:0;top:756px;width:1911px;height:2px;background:#dbdbdb"></div>
</div>
<div class="abs nowrap" style="left:594px;top:1067.1px;font-weight:bold;letter-spacing:0.3px">Name</div>
<div class="abs nowrap" style="left:1231px;top:1067.1px;font-weight:bold;letter-spacing:0.25px">Last commit</div>
<div class="abs nowrap" style="left:2140px;width:300px;text-align:right;top:1067.1px;font-weight:bold;letter-spacing:0.3px">Last update</div>
<svg class="abs" style="left:593px;top:1155px" width="32" height="32" viewBox="0 0 32 32" fill="none" stroke="#666" stroke-width="3" stroke-linejoin="round"><path d="M2.6 5.6H12.2L14.6 8.6H29.4V27H2.6Z M2.6 12.2H29.4"/></svg>
<div class="abs nowrap" style="left:634px;top:1152.3px;letter-spacing:0.68px">deploy/charts/wsj-standup</div>
<div class="abs nowrap g6" style="left:1231px;top:1152.3px;letter-spacing:0.45px">refactor(helm): change default ImagePullP...</div>
<div class="abs nowrap g6" style="left:2140px;width:300px;text-align:right;top:1152.3px;letter-spacing:0.44px">3 months ago</div>
<svg class="abs" style="left:593px;top:1239px" width="32" height="32" viewBox="0 0 32 32"><g fill="#0087c9"><rect x="5.5" y="11.2" width="2.9" height="2.6"/><rect x="9" y="11.2" width="2.9" height="2.6"/><rect x="12.5" y="11.2" width="2.9" height="2.6"/><rect x="16" y="11.2" width="2.9" height="2.6"/><rect x="19.5" y="11.2" width="2.9" height="2.6"/><rect x="9" y="7.8" width="2.9" height="2.6"/><rect x="12.5" y="7.8" width="2.9" height="2.6"/><rect x="16" y="7.8" width="2.9" height="2.6"/><rect x="16" y="4.4" width="2.9" height="2.6"/><path d="M1.4 14.6H25.2Q25.6 12.4 26.8 12Q28 13 28.4 14.4Q30.6 14.6 31.2 15.2Q29.6 16.8 27.6 16.8Q25 24.4 14.2 25.2Q3.4 25.6 1.4 17Z"/></g><circle cx="6.8" cy="18.8" r="1.2" fill="#fff"/></svg>
<div class="abs nowrap" style="left:634px;top:1236.3px;letter-spacing:0.39px">.dockerignore</div>
<div class="abs nowrap g6" style="left:1231px;top:1236.3px;letter-spacing:0.47px">feat: dockerize app</div>
<div class="abs nowrap g6" style="left:2140px;width:300px;text-align:right;top:1236.3px;letter-spacing:0.44px">6 months ago</div>
<svg class="abs" style="left:593px;top:1323px" width="32" height="32" viewBox="0 0 32 32" stroke="#222" stroke-width="0.9" stroke-linejoin="round"><path fill="#fbe6e8" d="M10.8 11Q9.8 6.4 11.4 4L13.4 5.4L15 3.2Q17.6 5.6 16.2 10.6Z"/><path fill="#fbe6e8" d="M20.2 13.6Q22 11 25.6 11.4Q29 12.2 29.6 14.2Q27.4 18 21.6 20.6Z"/><path fill="#fefafa" d="M3 28.4Q2 22 4.6 16.4Q7.4 11 12.6 10.4Q18.6 10.4 21 14.6Q22.4 19.6 18.4 24Q12 28.6 3 28.4Z"/><path fill="none" d="M3.6 17.6Q7 15.6 10.6 17.2Q13.4 16.6 16.6 18.4M9 19.2Q11 21 13.4 19.6"/></svg>
<div class="abs nowrap" style="left:634px;top:1320.3px;letter-spacing:0.62px">.editorconfig</div>
<div class="abs nowrap g6" style="left:1231px;top:1320.3px;letter-spacing:0.6px">feat: initial commit</div>
<div class="abs nowrap g6" style="left:2140px;width:300px;text-align:right;top:1320.3px;letter-spacing:0.44px">6 months ago</div>
<svg class="abs" style="left:593px;top:1407px" width="32" height="32" viewBox="0 0 32 32"><path fill="#e84e31" d="M14.4 3.4Q16 1.8 17.6 3.4L28.6 14.4Q30.2 16 28.6 17.6L17.6 28.6Q16 30.2 14.4 28.6L3.4 17.6Q1.8 16 3.4 14.4Z"/><g stroke="#fff" stroke-width="2.2" fill="none" stroke-linecap="round"><path d="M11.4 6.4L15.4 10.4V21.2M15.4 10.4L20 15"/></g><circle cx="15.4" cy="22.2" r="2.4" fill="#fff"/><circle cx="20.6" cy="15.8" r="2.4" fill="#fff"/></svg>
<div class="abs nowrap" style="left:634px;top:1404.3px;letter-spacing:0.45px">.gitignore</div>
<div class="abs nowrap g6" style="left:1231px;top:1404.3px;letter-spacing:0.6px">feat: initial commit</div>
<div class="abs nowrap g6" style="left:2140px;width:300px;text-align:right;top:1404.3px;letter-spacing:0.44px">6 months ago</div>
<svg class="abs" style="left:593px;top:1491px" width="32" height="32" viewBox="0 0 25 24" ><g transform="translate(0,1)"><path fill="#e24329" d="M24.507 9.5l-.034-.09L21.082.562a.896.896 0 0 0-1.694.091l-2.29 7.01H7.825L5.535.653a.898.898 0 0 0-1.694-.09L.451 9.411.416 9.5a6.297 6.297 0 0 0 2.09 7.278l.012.01.03.022 5.16 3.867 2.56 1.935 1.554 1.176a1.051 1.051 0 0 0 1.268 0l1.555-1.176 2.56-1.935 5.197-3.89.014-.01A6.297 6.297 0 0 0 24.507 9.5z"/><path fill="#fc6d26" d="M24.507 9.5l-.034-.09a11.44 11.440 0 0-4.56 2.051l-7.447 5.632 4.742 3.584 5.197-3.89.014-.01A6.297 6.297 0 0 0 24.507 9.5z"/><path fill="#fca326" d="M7.707 20.677l2.56 1.935 1.555 1.176a1.051 1.051 0 0 0 1.268 0l1.555-1.176 2.56-1.935-4.743-3.584-4.755 3.584z"/><path fill="#fc6d26" d="M5.01 11.461a11.43 11.43 0 0 0-4.56-2.05L.416 9.5a6.297 6.297 0 0 0 2.09 7.278l.012.01.03.022 5.16 3.867 4.745-3.584-7.444-5.632z"/></g></svg>
<div class="abs nowrap" style="left:634px;top:1488.3px;letter-spacing:0.45px">.gitlab-ci.yml</div>
<div class="abs nowrap g6" style="left:1231px;top:1488.3px;letter-spacing:0.65px">refactor: rename chart to charts [ci skip]</div>
<div class="abs nowrap g6" style="left:2140px;width:300px;text-align:right;top:1488.3px;letter-spacing:0.44px">5 months ago</div>
<svg class="abs" style="left:593px;top:1575px" width="32" height="32" viewBox="0 0 32 32"><g fill="#0087c9"><rect x="5.5" y="11.2" width="2.9" height="2.6"/><rect x="9" y="11.2" width="2.9" height="2.6"/><rect x="12.5" y="11.2" width="2.9" height="2.6"/><rect x="16" y="11.2" width="2.9" height="2.6"/><rect x="19.5" y="11.2" width="2.9" height="2.6"/><rect x="9" y="7.8" width="2.9" height="2.6"/><rect x="12.5" y="7.8" width="2.9" height="2.6"/><rect x="16" y="7.8" width="2.9" height="2.6"/><rect x="16" y="4.4" width="2.9" height="2.6"/><path d="M1.4 14.6H25.2Q25.6 12.4 26.8 12Q28 13 28.4 14.4Q30.6 14.6 31.2 15.2Q29.6 16.8 27.6 16.8Q25 24.4 14.2 25.2Q3.4 25.6 1.4 17Z"/></g><circle cx="6.8" cy="18.8" r="1.2" fill="#fff"/></svg>
<div class="abs nowrap" style="left:634px;top:1572.3px;letter-spacing:0.45px">Dockerfile</div>
<div class="abs nowrap g6" style="left:1231px;top:1572.3px;letter-spacing:0.47px">feat: dockerize app</div>
<div class="abs nowrap g6" style="left:2140px;width:300px;text-align:right;top:1572.3px;letter-spacing:0.44px">6 months ago</div>
<svg class="abs" style="left:593px;top:1659px" width="32" height="32" viewBox="0 0 32 32"><path fill="#42a5f5" d="M2.6 21.8V10.6H6.2L9.4 14.8L12.6 10.6H16.2V21.8H12.8V16L9.4 20.2L6 16V21.8Z M20.4 10.6H23.8V15.6H26.8L22.1 21.8L17.4 15.6H20.4Z"/></svg>
<div class="abs nowrap" style="left:634px;top:1656.3px;letter-spacing:-0.3px">README.md</div>
<div class="abs nowrap g6" style="left:1231px;top:1656.3px;letter-spacing:0.6px">feat: initial commit</div>
<div class="abs nowrap g6" style="left:2140px;width:300px;text-align:right;top:1656.3px;letter-spacing:0.44px">6 months ago</div>
</div></body></html>
